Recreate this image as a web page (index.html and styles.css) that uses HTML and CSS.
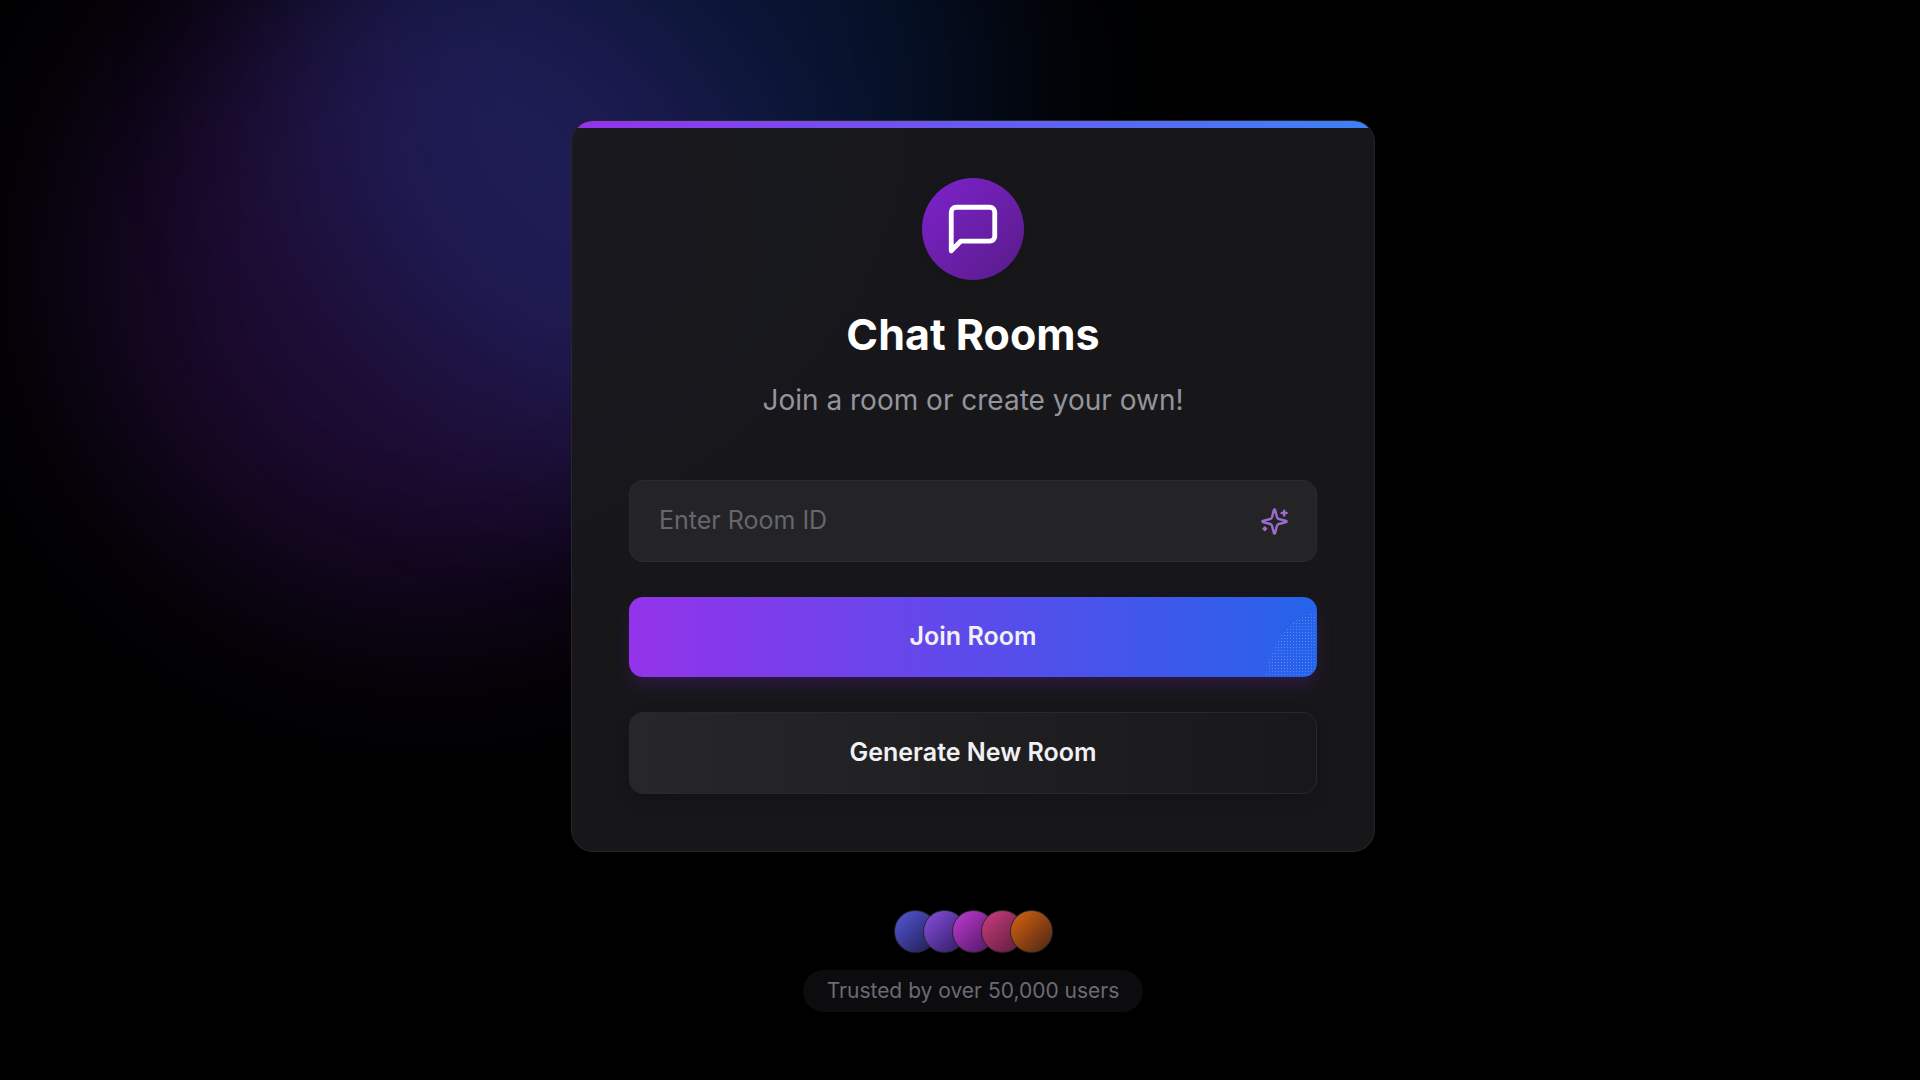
FILE: index.html
```html
<!DOCTYPE html>
<html lang="en">
<head>
    <meta charset="UTF-8">
    <meta name="viewport" content="width=device-width, initial-scale=1.0">
    <title>Chat Rooms</title>
    <link rel="stylesheet" href="styles.css">
</head>
<body>
    <div class="glow glow-purple"></div>
    <div class="glow glow-blue"></div>

    <main class="page">
        <section class="card">
            <div class="logo">
                <svg class="logo-icon" viewBox="0 0 24 24" fill="none" stroke="currentColor" stroke-width="2" stroke-linecap="round" stroke-linejoin="round" aria-hidden="true">
                    <path d="M21 15a2 2 0 0 1-2 2H7l-4 4V5a2 2 0 0 1 2-2h14a2 2 0 0 1 2 2z"/>
                </svg>
            </div>
            <h1 class="title">Chat Rooms</h1>
            <p class="subtitle">Join a room or create your own!</p>

            <form class="room-form">
                <div class="field">
                    <input class="room-input" id="room-id" type="text" placeholder="Enter Room ID" aria-label="Enter Room ID">
                    <svg class="sparkles" viewBox="0 0 24 24" fill="none" stroke="currentColor" stroke-width="2" stroke-linecap="round" stroke-linejoin="round" aria-hidden="true">
                        <path d="M9.937 15.5A2 2 0 0 0 8.5 14.063l-6.135-1.582a.5.5 0 0 1 0-.962L8.5 9.936A2 2 0 0 0 9.937 8.5l1.582-6.135a.5.5 0 0 1 .963 0L14.063 8.5A2 2 0 0 0 15.5 9.937l6.135 1.581a.5.5 0 0 1 0 .964L15.5 14.063a2 2 0 0 0-1.437 1.437l-1.582 6.135a.5.5 0 0 1-.963 0z"/>
                        <path d="M20 3v4"/>
                        <path d="M22 5h-4"/>
                        <path d="M4 17v2"/>
                        <path d="M5 18H3"/>
                    </svg>
                </div>
                <button class="btn btn-join" type="submit">Join Room</button>
                <button class="btn btn-generate" type="button">Generate New Room</button>
            </form>
        </section>

        <footer class="trust">
            <div class="avatars">
                <span class="avatar indigo"></span>
                <span class="avatar violet"></span>
                <span class="avatar fuchsia"></span>
                <span class="avatar pink"></span>
                <span class="avatar orange"></span>
            </div>
            <p class="trust-text">Trusted by over 50,000 users</p>
        </footer>
    </main>
</body>
</html>
```
FILE: styles.css
```css
/* styles.css */

* {
    box-sizing: border-box;
}

body {
    margin: 0;
    min-height: 100vh;
    background-color: #000;
    color: #fff;
    font-family: Inter, "Liberation Sans", sans-serif;
    position: relative;
    overflow: hidden;
}

/* Background glows */
.glow {
    position: absolute;
    border-radius: 50%;
    filter: blur(92px);
}

.glow-purple {
    left: 90px;
    top: -70px;
    width: 680px;
    height: 680px;
    background-color: rgba(147, 51, 234, 0.2);
}

.glow-blue {
    left: 300px;
    top: -250px;
    width: 690px;
    height: 690px;
    background-color: rgba(37, 99, 235, 0.2);
}

.page {
    position: relative;
    display: flex;
    flex-direction: column;
    align-items: center;
    padding: 120px 0 68px 26px;
}

/* Card */
.card {
    position: relative;
    width: 100%;
    max-width: 804px;
    padding: 57px;
    border: 1px solid #27272a;
    border-radius: 22px;
    background-color: rgba(24, 24, 27, 0.95);
    overflow: hidden;
    text-align: center;
}

.card::before {
    content: "";
    position: absolute;
    top: 0;
    left: 0;
    right: 0;
    height: 7px;
    background: linear-gradient(to right, #9333ea, #3b82f6);
}

.logo {
    display: flex;
    align-items: center;
    justify-content: center;
    width: 102px;
    height: 102px;
    margin: 0 auto 30px;
    border-radius: 50%;
    background: linear-gradient(to bottom right, #7e22ce, #581c87);
    box-shadow: 0 4px 8px rgba(0, 0, 0, 0.1);
}

.logo-icon {
    width: 58px;
    height: 58px;
}

.title {
    margin: 0 0 22px;
    font-size: 43px;
    line-height: 48px;
    font-weight: 700;
}

.subtitle {
    margin: 0 0 60px;
    color: #94949c;
    font-size: 28px;
    line-height: 40px;
}

/* Form */
.room-form {
    display: flex;
    flex-direction: column;
    gap: 35px;
}

.field {
    position: relative;
    display: flex;
}

.room-input {
    width: 100%;
    height: 82px;
    padding: 0 72px 3px 29px;
    border: 1px solid #2c2c2f;
    border-radius: 14px;
    background-color: #242426;
    color: #fff;
    font-family: inherit;
    font-size: 25px;
    outline: none;
}

.room-input::placeholder {
    color: #66666e;
    opacity: 1;
}

.sparkles {
    position: absolute;
    right: 28px;
    top: 50%;
    width: 29px;
    height: 29px;
    margin-top: -14px;
    color: #9b6bcd;
}

.btn {
    height: 82px;
    padding: 0 29px 3px;
    border: 1px solid #29292c;
    border-radius: 14px;
    color: #f1f1f4;
    font-family: inherit;
    font-size: 25px;
    font-weight: 600;
    cursor: pointer;
}

.btn-join {
    position: relative;
    height: 80px;
    border: none;
    background: linear-gradient(to right, #9333ea, #2563eb);
    box-shadow: 0 10px 18px -3px rgba(88, 28, 135, 0.4);
    overflow: hidden;
}

/* dotted shine in the corner */
.btn-join::after {
    content: "";
    position: absolute;
    right: -58px;
    bottom: -90px;
    width: 110px;
    height: 154px;
    border-radius: 50%;
    background: radial-gradient(circle, rgba(120, 165, 255, 0.6) 1px, transparent 1px) 0 0 / 3px 3px;
}

.btn-generate {
    background: linear-gradient(to right, #27272a, #18181b);
    box-shadow: 0 8px 18px rgba(0, 0, 0, 0.15);
}

/* Footer */
.trust {
    display: flex;
    flex-direction: column;
    align-items: center;
    gap: 17px;
    margin-top: 58px;
}

.avatars {
    display: flex;
}

.avatar {
    width: 43px;
    height: 43px;
    border: 1px solid #27272a;
    border-radius: 50%;
}

.avatar + .avatar {
    margin-left: -14px;
}

.indigo {
    background: linear-gradient(to bottom right, #5558d9, #1e1b4b);
}

.violet {
    background: linear-gradient(to bottom right, #8b4fe0, #2a1a5e);
}

.fuchsia {
    background: linear-gradient(to bottom right, #c03bd3, #4a1560);
}

.pink {
    background: linear-gradient(to bottom right, #cc3d80, #5a1a38);
}

.orange {
    background: linear-gradient(to bottom right, #d9640f, #4a2415);
}

.trust-text {
    margin: 0;
    padding: 0 24px;
    border-radius: 21px;
    background-color: #0c0c0e;
    color: #6b6b73;
    font-size: 21px;
    line-height: 42px;
}
```
